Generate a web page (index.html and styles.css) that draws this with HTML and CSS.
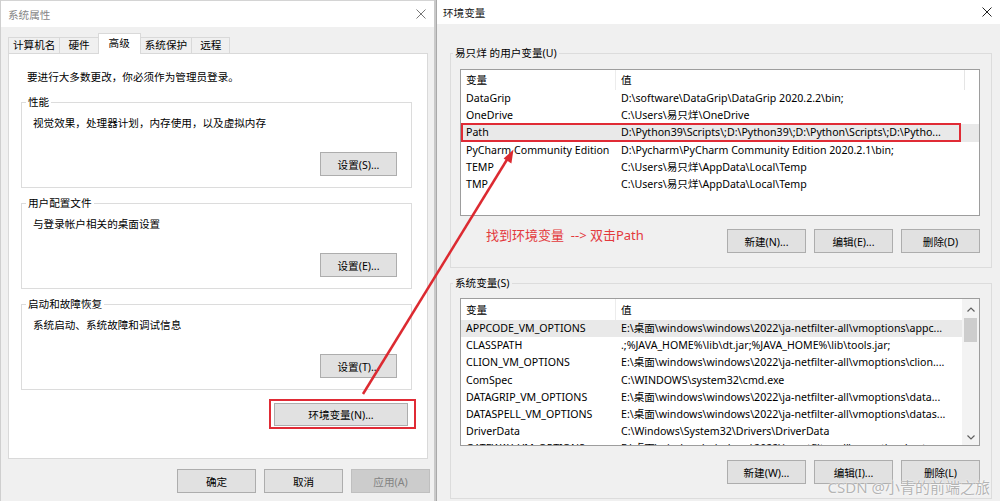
FILE: index.html
```html
<!DOCTYPE html>
<html lang="zh-CN">
<head>
    <meta charset="UTF-8">
    <title>系统属性 - 环境变量</title>
    <link rel="stylesheet" href="styles.css">
</head>
<body>
    <div class="dlg dlg-sys">
        <div class="titlebar">
            <span>系统属性</span>
            <svg class="close" viewBox="0 0 10 10"><path d="M0.5 0.5L9.5 9.5M9.5 0.5L0.5 9.5"/></svg>
        </div>
        <div class="sys-body">
            <div class="tabs">
                <div class="tab">计算机名</div>
                <div class="tab tab-short">硬件</div>
                <div class="tab tab-short active">高级</div>
                <div class="tab">系统保护</div>
                <div class="tab tab-short">远程</div>
            </div>
            <div class="tab-page">
                <p class="intro">要进行大多数更改，你必须作为管理员登录。</p>

                <fieldset class="group">
                    <legend>性能</legend>
                    <p>视觉效果，处理器计划，内存使用，以及虚拟内存</p>
                    <div class="group-actions"><button class="btn btn-set">设置(S)...</button></div>
                </fieldset>

                <fieldset class="group">
                    <legend>用户配置文件</legend>
                    <p>与登录帐户相关的桌面设置</p>
                    <div class="group-actions"><button class="btn btn-set">设置(E)...</button></div>
                </fieldset>

                <fieldset class="group">
                    <legend>启动和故障恢复</legend>
                    <p>系统启动、系统故障和调试信息</p>
                    <div class="group-actions"><button class="btn btn-set">设置(T)...</button></div>
                </fieldset>

                <div class="env-row">
                    <span class="mark"><button class="btn btn-env">环境变量(N)...</button></span>
                </div>
            </div>
            <div class="dlg-actions">
                <button class="btn btn-dlg">确定</button>
                <button class="btn btn-dlg">取消</button>
                <button class="btn btn-dlg" disabled>应用(A)</button>
            </div>
        </div>
    </div>

    <div class="dlg dlg-env">
        <div class="titlebar">
            <span>环境变量</span>
            <svg class="close" viewBox="0 0 10 10"><path d="M0.5 0.5L9.5 9.5M9.5 0.5L0.5 9.5"/></svg>
        </div>
        <div class="env-body">
            <fieldset class="group env-group">
                <legend>易只烊 的用户变量(U)</legend>
                <div class="listview lv-user">
                    <div class="lv-main">
                        <div class="lv-head"><span class="c1">变量</span><span class="c2">值</span></div>
                        <div class="row"><span class="c1">DataGrip</span><span class="c2">D:\software\DataGrip\DataGrip 2020.2.2\bin;</span></div>
                        <div class="row"><span class="c1">OneDrive</span><span class="c2">C:\Users\易只烊\OneDrive</span></div>
                        <div class="row sel"><span class="c1">Path</span><span class="c2">D:\Python39\Scripts\;D:\Python39\;D:\Python\Scripts\;D:\Pytho...</span><span class="redbox"></span></div>
                        <div class="row"><span class="c1">PyCharm Community Edition</span><span class="c2">D:\Pycharm\PyCharm Community Edition 2020.2.1\bin;</span></div>
                        <div class="row"><span class="c1">TEMP</span><span class="c2">C:\Users\易只烊\AppData\Local\Temp</span></div>
                        <div class="row"><span class="c1">TMP</span><span class="c2">C:\Users\易只烊\AppData\Local\Temp</span></div>
                    </div>
                </div>
                <div class="env-actions">
                    <span class="note">找到环境变量&nbsp;&nbsp;--&gt; 双击Path</span>
                    <button class="btn btn-env-act">新建(N)...</button>
                    <button class="btn btn-env-act">编辑(E)...</button>
                    <button class="btn btn-env-act">删除(D)</button>
                </div>
            </fieldset>

            <fieldset class="group env-group env-group-sys">
                <legend>系统变量(S)</legend>
                <div class="listview lv-sys">
                    <div class="lv-main">
                        <div class="lv-head"><span class="c1">变量</span><span class="c2">值</span></div>
                        <div class="row sel"><span class="c1">APPCODE_VM_OPTIONS</span><span class="c2">E:\桌面\windows\windows\2022\ja-netfilter-all\vmoptions\appc...</span></div>
                        <div class="row"><span class="c1">CLASSPATH</span><span class="c2">.;%JAVA_HOME%\lib\dt.jar;%JAVA_HOME%\lib\tools.jar;</span></div>
                        <div class="row"><span class="c1">CLION_VM_OPTIONS</span><span class="c2">E:\桌面\windows\windows\2022\ja-netfilter-all\vmoptions\clion....</span></div>
                        <div class="row"><span class="c1">ComSpec</span><span class="c2">C:\WINDOWS\system32\cmd.exe</span></div>
                        <div class="row"><span class="c1">DATAGRIP_VM_OPTIONS</span><span class="c2">E:\桌面\windows\windows\2022\ja-netfilter-all\vmoptions\data...</span></div>
                        <div class="row"><span class="c1">DATASPELL_VM_OPTIONS</span><span class="c2">E:\桌面\windows\windows\2022\ja-netfilter-all\vmoptions\datas...</span></div>
                        <div class="row"><span class="c1">DriverData</span><span class="c2">C:\Windows\System32\Drivers\DriverData</span></div>
                        <div class="row"><span class="c1">GATEWAY_VM_OPTIONS</span><span class="c2">E:\桌面\windows\windows\2022\ja-netfilter-all\vmoptions\gatew...</span></div>
                    </div>
                    <div class="scrollbar">
                        <svg class="sb-arrow" viewBox="0 0 8 5"><path d="M0.5 4.5L4 1L7.5 4.5"/></svg>
                        <div class="sb-track"><div class="sb-thumb"></div></div>
                        <svg class="sb-arrow" viewBox="0 0 8 5"><path d="M0.5 0.5L4 4L7.5 0.5"/></svg>
                    </div>
                </div>
                <div class="env-actions">
                    <button class="btn btn-env-act">新建(W)...</button>
                    <button class="btn btn-env-act">编辑(I)...</button>
                    <button class="btn btn-env-act">删除(L)</button>
                </div>
            </fieldset>
        </div>
    </div>

    <!-- annotation arrow: from the 环境变量 button up to the Path row -->
    <svg class="arrow" viewBox="0 0 1000 501">
        <line x1="363" y1="394" x2="508" y2="158"/>
        <polygon points="513.5,149.5 503.6,158.6 511.4,163.4"/>
    </svg>

    <div class="watermark">CSDN @小青的前端之旅</div>
</body>
</html>
```

FILE: styles.css
```css
* {
    box-sizing: border-box;
}
body {
    margin: 0;
    width: 1000px;
    height: 501px;
    overflow: hidden;
    display: flex;
    position: relative;
    font-family: "Noto Sans", "Noto Sans CJK SC", sans-serif;
    font-size: 10.6px;
    color: #000;
    background: #f0f0f0;
}
p {
    margin: 0;
}

/* dialogs */
.dlg {
    display: flex;
    flex-direction: column;
    height: 501px;
    background: #f0f0f0;
}
.dlg-sys {
    width: 436px;
    border-right: 2px solid #c9c9c9;
    border-left: 1px solid #cfcfcf;
}
.dlg-env {
    flex: 1;
    border-left: 1px solid #a9a9a9;
}
.titlebar {
    display: flex;
    justify-content: space-between;
    align-items: center;
    background: #fff;
}
.dlg-sys .titlebar {
    height: 27px;
    padding: 0 8px 0 7px;
    color: #858585;
    border-top: 1px solid #d4d4d4;
}
.dlg-env .titlebar {
    height: 24px;
    padding: 0 8px 0 6px;
    color: #1a1a1a;
}
.close {
    width: 10px;
    height: 10px;
    fill: none;
    stroke: #777;
    stroke-width: 1;
}
.dlg-env .close {
    stroke: #222;
}

/* buttons */
.btn {
    height: 24px;
    padding: 0;
    border: 1px solid #adadad;
    background: #e1e1e1;
    font: inherit;
    color: #000;
    text-align: center;
}
.btn:disabled {
    background: #cccccc;
    border-color: #bfbfbf;
    color: #838383;
}
.btn-set {
    width: 77px;
}
.btn-env {
    width: 134px;
    height: 23px;
}
.btn-dlg {
    width: 79px;
}
.btn-env-act {
    width: 79px;
}

/* left dialog */
.sys-body {
    flex: 1;
    padding: 6px 4px 0 7px;
    display: flex;
    flex-direction: column;
}
.tabs {
    display: flex;
    align-items: flex-end;
    height: 20px;
}
.tab {
    height: 16px;
    line-height: 14px;
    padding: 0 4px;
    margin-right: -1px;
    border: 1px solid #d9d9d9;
    border-bottom: none;
    background: #f0f0f0;
    white-space: nowrap;
}
.tab-short {
    padding: 0 8px;
}
.tab.active {
    height: 21px;
    padding: 2px 10px 0;
    margin-bottom: -1px;
    background: #fff;
    position: relative;
    z-index: 1;
}
.tab-page {
    width: 420px;
    height: 406px;
    background: #fff;
    border: 1px solid #d9d9d9;
    padding: 15px 15px 0 12px;
}
.intro {
    line-height: 16px;
    padding-left: 6px;
}
.group {
    margin: 9px 0 0;
    padding: 5px 14px 11px 11px;
    border: 1px solid #dcdcdc;
    min-width: 0;
}
.group + .group {
    margin-top: 7px;
}
.group legend {
    padding: 0 2px;
    margin-left: -7px;
    line-height: 16px;
}
.group p {
    line-height: 16px;
}
.group-actions {
    display: flex;
    justify-content: flex-end;
    margin-top: 21px;
}
.env-row {
    display: flex;
    justify-content: flex-end;
    margin: 9px -4px 0 0;
}
.mark {
    display: flex;
    border: 2px solid #e02b35;
    padding: 2px 6px 1px 3px;
}
.dlg-actions {
    display: flex;
    justify-content: flex-end;
    gap: 8px;
    margin-top: 10px;
}

/* right dialog */
.env-body {
    flex: 1;
    padding: 21px 8px 0 13px;
}
.env-group {
    margin: 0;
    padding: 8px 11px 14px 9px;
}
.env-group-sys {
    margin-top: 9px;
    padding-top: 7px;
}
.listview {
    display: flex;
    height: 147px;
    border: 1px solid #9d9d9d;
    background: #fff;
    overflow: hidden;
}
.lv-sys {
    height: 148px;
}
.lv-main {
    flex: 1;
    min-width: 0;
    overflow: hidden;
}
.lv-head {
    display: flex;
    height: 20px;
    line-height: 20px;
}
.lv-sys .lv-head {
    height: 21px;
    line-height: 22px;
}
.lv-head .c1 {
    border-right: 1px solid #ececec;
}
.lv-user .lv-head .c2 {
    flex: none;
    width: 349px;
    border-right: 1px solid #e5e5e5;
}
.row {
    display: flex;
    height: 17.2px;
    line-height: 17px;
    position: relative;
}
.row.sel {
    background: #e9e9e9;
}
.c1 {
    width: 155px;
    flex: none;
    padding-left: 5px;
    white-space: nowrap;
    overflow: hidden;
}
.c2 {
    flex: 1;
    min-width: 0;
    padding-left: 5px;
    white-space: nowrap;
    overflow: hidden;
}
.redbox {
    position: absolute;
    left: 0;
    top: -1px;
    width: 500px;
    height: 19px;
    border: 2px solid #e02b35;
}
.scrollbar {
    width: 17px;
    flex: none;
    display: flex;
    flex-direction: column;
    align-items: center;
    background: #f3f3f3;
}
.sb-arrow {
    width: 8px;
    height: 5px;
    margin: 8px 0 5px;
    fill: none;
    stroke: #606060;
    stroke-width: 1.2;
}
.sb-track {
    flex: 1;
    width: 100%;
    padding: 0 2px;
}
.sb-thumb {
    height: 24px;
    margin-top: 1px;
    background: #cdcdcd;
}
.env-actions {
    display: flex;
    justify-content: flex-end;
    align-items: flex-start;
    gap: 8px;
    margin-top: 13px;
}
.env-group-sys .env-actions {
    margin-top: 14px;
}
.note {
    margin: -2px auto 0 26px;
    font-size: 13px;
    line-height: 16px;
    color: #e3393c;
    white-space: nowrap;
}

/* overlays */
.arrow {
    position: absolute;
    left: 0;
    top: 0;
    width: 1000px;
    height: 501px;
    pointer-events: none;
}
.arrow line {
    stroke: #dc2a31;
    stroke-width: 2.5;
}
.arrow polygon {
    fill: #dc2a31;
}
.watermark {
    position: absolute;
    right: 10px;
    bottom: 5px;
    font-size: 15px;
    line-height: 18px;
    color: #b4b4b4;
    text-shadow: 0 0 2px #fff, 0 0 1px #fff;
}
```
